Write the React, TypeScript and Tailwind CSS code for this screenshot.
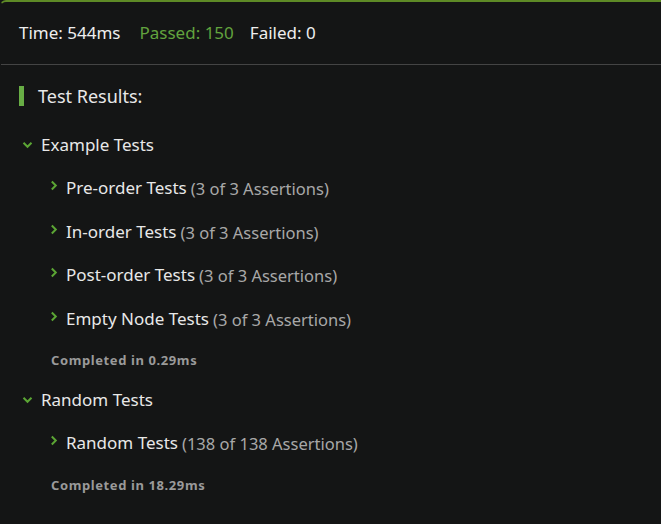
import React from "react";

const font = { fontFamily: "'Noto Sans', sans-serif" };

function ChevronDown() {
  return (
    <svg width="11" height="8" viewBox="0 0 11 8" className="shrink-0">
      <path d="M1.5 1.8 L5.5 5.8 L9.5 1.8" fill="none" stroke="#5ba534" strokeWidth="2" />
    </svg>
  );
}

function ChevronRight() {
  return (
    <svg width="8" height="11" viewBox="0 0 8 11" className="shrink-0">
      <path d="M1.8 1.5 L5.8 5.5 L1.8 9.5" fill="none" stroke="#5ba534" strokeWidth="2" />
    </svg>
  );
}

function Item({ name, count }: { name: string; count: string }) {
  return (
    <div className="flex items-center h-[43.5px] pl-[49px]">
      <div className="-mt-[6px]"><ChevronRight /></div>
      <span className="ml-[8px] text-[17px] text-[#e8e8e8] -mt-[2px]">{name}</span>
      <span className="ml-[4px] text-[16.5px] text-[#a8a8a8] mt-[2px]">{count}</span>
    </div>
  );
}

function Group({ title, items, time }: { title: string; items: [string, string][]; time: string }) {
  return (
    <div>
      <div className="flex items-center h-[36px] pl-[21px]">
        <ChevronDown />
        <span className="ml-[8px] text-[17px] text-[#e8e8e8]">{title}</span>
      </div>
      <div className="pt-[4px]">
        {items.map(([n, c]) => (
          <Item key={n} name={n} count={c} />
        ))}
      </div>
      <div className="pl-[50px] h-[40px] flex items-center text-[13px] font-bold text-[#9a9a9a] tracking-[0.6px]">
        {time}
      </div>
    </div>
  );
}

export default function App() {
  return (
    <div className="w-[661px] h-[524px] bg-[#141515] overflow-hidden" style={font}>
      <div className="h-full border-t-2 border-l border-[#5e8a26] rounded-tl-[6px] border-l-transparent">
        <div className="flex items-center h-[63px] pl-[18px] gap-[19px] text-[17px] border-b border-[#444444]">
          <span className="text-[#eeeeee]">Time: 544ms</span>
          <span className="text-[#62a33e]">Passed: 150</span>
          <span className="text-[#eeeeee] -ml-[3px]">Failed: 0</span>
        </div>
        <div className="pt-[21px]">
          <div className="flex items-center pl-[18px] h-[20px]">
            <div className="w-[5px] h-[20px] bg-[#68ad45]" />
            <span className="ml-[14px] text-[18px] text-[#e8e8e8]">Test Results:</span>
          </div>
          <div className="pt-[21px]">
            <Group
              title="Example Tests"
              items={[
                ["Pre-order Tests", "(3 of 3 Assertions)"],
                ["In-order Tests", "(3 of 3 Assertions)"],
                ["Post-order Tests", "(3 of 3 Assertions)"],
                ["Empty Node Tests", "(3 of 3 Assertions)"],
              ]}
              time="Completed in 0.29ms"
            />
            <div className="pt-[1px]">
              <Group
                title="Random Tests"
                items={[["Random Tests", "(138 of 138 Assertions)"]]}
                time="Completed in 18.29ms"
              />
            </div>
          </div>
        </div>
      </div>
    </div>
  );
}
